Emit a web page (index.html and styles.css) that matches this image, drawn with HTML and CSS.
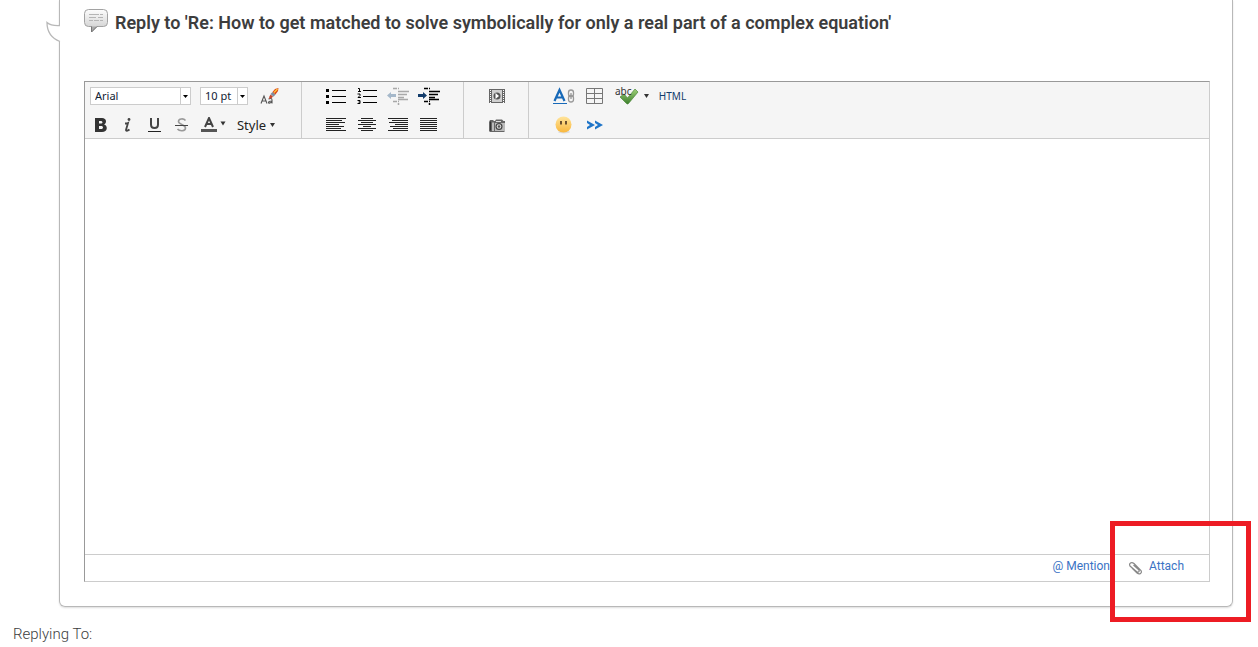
FILE: index.html
```html
<!DOCTYPE html>
<html lang="en">
<head>
<meta charset="utf-8">
<title>Reply</title>
<link rel="stylesheet" href="styles.css">
</head>
<body>
<main class="card">
  <svg class="tail" width="15" height="24" viewBox="0 0 15 24" aria-hidden="true">
    <path d="M15 4.500H13.500Q5 5 1 1.500C1 10 5 17 14 20.500L15 21Z" fill="#fff"/>
    <path d="M14 4.500Q5 5 1 1.500C1 10 5 17 14 20.500" fill="none" stroke="#b8b8b8" stroke-width="1.300"/>
  </svg>
  <header class="heading">
    <svg width="24" height="24" viewBox="0 0 24 24" aria-hidden="true">
      <defs><linearGradient id="bubble" x1="0" y1="0" x2="0" y2="1"><stop offset="0" stop-color="#fdfdfd"/><stop offset="1" stop-color="#c9c9c9"/></linearGradient></defs>
      <path d="M4.500.5h15q4 0 4 4v9q0 4-4 4H13l-5.500 5.500v-5.500h-3q-4 0-4-4v-9q0-4 4-4z" fill="url(#bubble)" stroke="#a2a2a2"/>
      <path d="M7.500 17.500V23l5.500-5.500" fill="#aaa" stroke="#777"/>
      <path d="M5 5.500h10M16 5.500h3M5 8.500h7M14 8.500h5M5 11.500h4M10 11.500h5M16 11.500h3" stroke="#b5b5b5"/>
    </svg>
    <h1 class="title">Reply to 'Re: How to get matched to solve symbolically for only a real part of a complex equation'</h1>
  </header>

  <section class="editor">
    <div class="toolbar">
      <div class="group group-text">
        <div class="row">
          <label class="picker picker-font"><select aria-label="Font"><option>Arial</option></select>
            <svg width="10" height="16" viewBox="0 0 10 16"><path d="M.5 0v16" stroke="#ccc"/><path d="M3 7h5L5.500 10z" fill="#000"/></svg></label>
          <label class="picker picker-size"><select aria-label="Font size"><option>10 pt</option></select>
            <svg width="10" height="16" viewBox="0 0 10 16"><path d="M.5 0v16" stroke="#ccc"/><path d="M3 7h5L5.500 10z" fill="#000"/></svg></label>
          <button class="tool" aria-label="Clear formatting"><svg width="20" height="18" viewBox="0 0 20 18">
            <path d="M1 16.500L4 9l3 7.500M2 14h4" fill="none" stroke="#555" stroke-width="1.100"/>
            <path d="M8.500 12q3.500-1.500 3.500 1v3.500M12 14q-3.500 0-3.500 1.500T12 15" fill="none" stroke="#555" stroke-width="1.100"/>
            <path d="M9 12q0-3 1.500-4.500l2.500 2q-1 2-4 2.500z" fill="#c4472e"/>
            <path d="M10.500 7l2-2 3 2.500-2 2.200z" fill="#7f8ea0"/>
            <path d="M12.500 5L15 2l3.500-1-.5 3-2.500 3.500z" fill="#dd4a18"/><path d="M14 5.500l3.500-3.500" stroke="#ffc93c" stroke-width="1.300"/></svg></button>
        </div>
        <div class="row row-style">
          <button class="tool" aria-label="Bold"><svg width="14" height="16" viewBox="0 0 14 16"><path fill-rule="evenodd" d="M1 1h7c5 0 5 5.500 2 6.500 4 1 4 7.500-2 7.500H1zM5 4v2.500h2.500q2-1.200 0-2.500zM5 9v3h3q2-1.500 0-3z" fill="#333"/></svg></button>
          <button class="tool" aria-label="Italic"><svg width="10" height="16" viewBox="0 0 10 16"><circle cx="6" cy="2.500" r="1.400" fill="#444"/><path d="M2 6.500q2 0 3-.5L3 13q0 2 3.500-.5" fill="none" stroke="#444" stroke-width="1.800"/></svg></button>
          <button class="tool" aria-label="Underline"><svg width="14" height="16" viewBox="0 0 14 16"><path d="M3 1v6.500q0 3.500 3.500 3.500T10 7.500V1" fill="none" stroke="#444" stroke-width="2"/><path d="M0 14.500h13" stroke="#222"/></svg></button>
          <button class="tool" aria-label="Strikethrough"><svg width="14" height="16" viewBox="0 0 14 16"><path d="M10.500 3.500C8.500 1 3.500 1.500 3.500 4.500s7 3 7 6.500-6 3.500-8 1" fill="none" stroke="#999" stroke-width="1.600"/><path d="M0 8.500h13" stroke="#444"/></svg></button>
          <button class="tool tool-color" aria-label="Text color"><svg width="25" height="16" viewBox="0 0 25 16"><path d="M4 10L8 1l4 9M5.500 7h5" fill="none" stroke="#444" stroke-width="2"/><path d="M0 12h16v3H0z" fill="#555"/><path d="M19.500 4.500h5l-2.500 4z" fill="#333"/></svg></button>
          <button class="tool tool-label">Style<svg width="5" height="5" viewBox="0 0 5 5"><path d="M0 0h5L2.500 4z" fill="#333"/></svg></button>
        </div>
      </div>

      <div class="group group-lists">
        <div class="row">
          <button class="tool" aria-label="Bulleted list"><svg width="20" height="16" viewBox="0 0 20 16"><path d="M6 2.500h14M6 8.500h14M6 14.500h14" stroke="#000"/><path d="M0 1h3v3H0zM0 7h3v3H0zM0 13h3v3H0z"/></svg></button>
          <button class="tool" aria-label="Numbered list"><svg width="20" height="18" viewBox="0 0 20 18"><path d="M6 3.500h14M6 9.500h14M6 15.500h14" stroke="#000"/><path d="M1 1.500h1.500V5M1 4.500h3M.5 7h2.500v1.500L1 10.500h3M.5 13.500H3v3H.5M1.500 15H3" fill="none" stroke="#000"/></svg></button>
          <button class="tool" aria-label="Outdent"><svg width="22" height="18" viewBox="0 0 22 18"><path d="M0 8.500L4 5v2h5v3H4v2z" fill="#a5b8ca"/><path d="M6 1.500h4m1 0h1M6 14.500h4m1 0h1M11.500 16v2M11 4.500h11M11 7.500h9M11 10.500h6M11 12.500h10" stroke="#a8a8a8" stroke-width="1.500"/></svg></button>
          <button class="tool" aria-label="Indent"><svg width="22" height="18" viewBox="0 0 22 18"><path d="M9 8.500L5 5v2H0v3h5v2z" fill="#123c6b"/><path d="M6 1.500h4m1 0h1M6 14.500h4m1 0h1M11.500 16v2M11 4.500h11M11 7.500h9M11 10.500h6M11 12.500h10" stroke="#000" stroke-width="1.500"/></svg></button>
        </div>
        <div class="row">
          <button class="tool" aria-label="Align left"><svg width="20" height="14" viewBox="0 0 20 14"><path d="M0 .5h20M0 2.500h16M0 4.500h19M0 6.500h13M0 8.500h18M0 10.500h15M0 12.500h20" stroke="#222"/></svg></button>
          <button class="tool" aria-label="Align center"><svg width="18" height="14" viewBox="0 0 18 14"><path d="M3 .5h12M0 2.500h18M3 4.500h12M0 6.500h18M5 8.500h8M0 10.500h18M3 12.500h12" stroke="#222"/></svg></button>
          <button class="tool" aria-label="Align right"><svg width="20" height="14" viewBox="0 0 20 14"><path d="M0 .5h20M4 2.500h16M1 4.500h19M7 6.500h13M2 8.500h18M5 10.500h15M0 12.500h20" stroke="#222"/></svg></button>
          <button class="tool" aria-label="Justify"><svg width="17" height="14" viewBox="0 0 17 14"><path d="M0 .5h17M0 2.500h17M0 4.500h17M0 6.500h17M0 8.500h17M0 10.500h17M0 12.500h17" stroke="#222"/></svg></button>
        </div>
      </div>

      <div class="group group-media">
        <div class="row">
          <button class="tool" aria-label="Insert video"><svg width="16" height="14" viewBox="0 0 16 14"><path d="M0 0h16v14H0z" fill="#666"/><path d="M3 1h10v12H3z" fill="#d0d0d0"/><path d="M1.500 1v13M14.500 1v13" stroke="#fff" stroke-dasharray="1 1"/><circle cx="8" cy="7" r="3.500" fill="#555"/><path d="M6.500 4v6L10 7z" fill="#fff"/></svg></button>
        </div>
        <div class="row">
          <button class="tool" aria-label="Insert image"><svg width="16" height="13" viewBox="0 0 16 13"><path d="M0 3l1-2h3l1 1h1l1-1.500h6L14.500 2H16v10l-1 1H1l-1-1z" fill="#666"/><path d="M3 3.500h2V12H3zM6 4h10v8H6z" fill="#bbb"/><path d="M1.500 2.500v9" stroke="#333"/><path d="M7 2.500h5" stroke="#ddd"/><circle cx="10" cy="7.500" r="3.500" fill="#444"/><circle cx="10" cy="7.500" r="2.300" fill="#e4e4e4"/><circle cx="10" cy="7.500" r="1.300" fill="#555"/></svg></button>
        </div>
      </div>

      <div class="group group-extras">
        <div class="row">
          <button class="tool" aria-label="Insert link"><svg width="22" height="18" viewBox="0 0 22 18"><path d="M1.500 14L6.500 3 11.500 14M3.500 10.500h6" fill="none" stroke="#1769b8" stroke-width="2.200"/><path d="M0 16.500h14" stroke="#1769b8"/><g fill="none" stroke="#999" stroke-width="1.300"><rect x="15.500" y="3" width="5" height="6.500" rx="2.500"/><rect x="15.500" y="8.500" width="5" height="6.500" rx="2.500"/><path d="M18 6v6"/></g></svg></button>
          <button class="tool" aria-label="Insert table"><svg width="17" height="16" viewBox="0 0 17 16"><path d="M.5.5h16v15H.5zM8.500.5v15M.5 5.500h16M.5 10.500h16" fill="none" stroke="#777"/></svg></button>
          <button class="tool tool-spell" aria-label="Check spelling"><svg width="34" height="24" viewBox="0 0 34 24"><defs><linearGradient id="check" x1="0" y1="0" x2="0" y2="1"><stop offset="0" stop-color="#9fd077"/><stop offset="1" stop-color="#3c7f2d"/></linearGradient></defs><path d="M5 13l4-3 3.500 4L20 5l3 3-9.500 11.500q-1 1-2 0z" fill="url(#check)" stroke="#4c8a3a" stroke-width=".7"/><text class="abc" x="0" y="11">abc</text><path d="M29 10h5l-2.500 4z" fill="#333"/></svg></button>
          <button class="tool tool-html">HTML</button>
        </div>
        <div class="row">
          <button class="tool" aria-label="Insert emoticon"><svg width="18" height="18" viewBox="0 0 18 18"><defs><linearGradient id="face" x1="0" y1="0" x2="0" y2="1"><stop offset="0" stop-color="#ffe49b"/><stop offset="1" stop-color="#f9b73c"/></linearGradient></defs><ellipse cx="9" cy="16" rx="6" ry="1.500" fill="#ddd"/><circle cx="8.500" cy="8.500" r="8" fill="url(#face)"/><path d="M6 5v3.500M11 5v3.500" stroke="#553b22" stroke-width="1.700"/></svg></button>
          <button class="tool" aria-label="More tools"><svg width="16" height="10" viewBox="0 0 16 10"><path d="M0 .5l8 4.500-8 4.500V7l3-2-3-2zM8 .5L16 5 8 9.500V7l3-2-3-2z" fill="#1f75c8"/></svg></button>
        </div>
      </div>
    </div>
    <textarea class="body" aria-label="Reply message"></textarea>
    <footer class="actions">
      <a href="#mention">@ Mention</a>
      <a href="#attach"><svg width="14" height="14" viewBox="0 0 14 14"><path d="M3 7l5 5q2 1.500 3.500.5t.5-3L5 2.500Q3 1 1.500 2T1 5l7 6q1.500.500 2-.5t-.5-2l-5-4.500" fill="none" stroke="#888" stroke-width="1.200"/></svg>Attach</a>
    </footer>
  </section>
  <div class="highlight"></div>
</main>
<p class="replying">Replying To:</p>
</body>
</html>
```
FILE: styles.css
```css
* { box-sizing: border-box; }
body { margin: 0; background: #fff; font-family: Roboto, "Open Sans", sans-serif; color: #3d3d3d; }
svg { display: block; flex: none; }

.card { position: relative; margin: 0 25px 0 59px; padding: 9px 22px 24px 24px; border: 1px solid #b8b8b8; border-top: 0; border-radius: 0 0 6px 6px; box-shadow: 0 1px 2px #ddd; }
.tail { position: absolute; left: -14px; top: 21px; }
.heading { display: flex; gap: 7px; height: 72px; }
.title { margin: 0; padding-top: 2px; font-size: 18px; line-height: 24px; font-weight: 600; }

.editor { border: 1px solid #ccc; border-top-color: #999; border-left-color: #999; }
.toolbar { display: flex; background: #f5f5f5; border-bottom: 1px solid #ccc; }
.group { border-right: 1px solid #ccc; }
.group-text { width: 217px; padding-left: 5px; }
.group-lists { width: 162px; padding-left: 18px; }
.group-media { width: 65px; padding-left: 17px; }
.group-extras { flex: 1; padding-left: 19px; border: 0; }
.row { display: flex; align-items: center; height: 28px; }
.row + .row { padding-top: 2px; }
.row-style { margin-left: -3px; }

.tool { display: flex; align-items: center; justify-content: center; width: 31px; height: 26px; padding: 0; border: 0; background: none; color: #222; font-family: "Noto Sans", sans-serif; }
.row-style .tool { width: 27px; }
.row-style .tool-color { width: 36px; }
.row-style .tool-label { width: 50px; gap: 4px; font-size: 13px; }
.tool-spell { width: 44px; }
.tool-html { width: 37px; color: #123c6b; font-size: 10px; }
.abc { font: 10px "Noto Sans", sans-serif; fill: #333; }

.picker { display: grid; height: 18px; margin-right: 9px; border: 1px solid #ccc; background: #fff; }
.picker-font { width: 101px; }
.picker-size { width: 48px; margin-right: 6px; }
.picker select { grid-area: 1 / 1; width: 100%; height: 16px; padding: 0 4px; border: 0; background: none; appearance: none; font: 11px/16px "Noto Sans", sans-serif; color: #123; }
.picker svg { grid-area: 1 / 1; justify-self: end; pointer-events: none; }

.body { display: block; width: 100%; height: 415px; padding: 8px; border: 0; outline: 0; resize: none; font: 13px Arial, "Liberation Sans", sans-serif; }
.actions { display: flex; justify-content: flex-end; gap: 19px; height: 27px; padding: 3px 25px 0 0; border-top: 1px solid #ccc; font-size: 12px; line-height: 16px; }
.actions a { display: flex; gap: 6px; color: #3a73c4; text-decoration: none; }
.actions svg { margin-top: 3px; }
.highlight { position: absolute; right: -19px; bottom: -16px; width: 141px; height: 101px; border: 5px solid #ed1c24; pointer-events: none; }
.replying { margin: 17px 13px 0; font-size: 15px; line-height: 20px; font-weight: 300; }
```
